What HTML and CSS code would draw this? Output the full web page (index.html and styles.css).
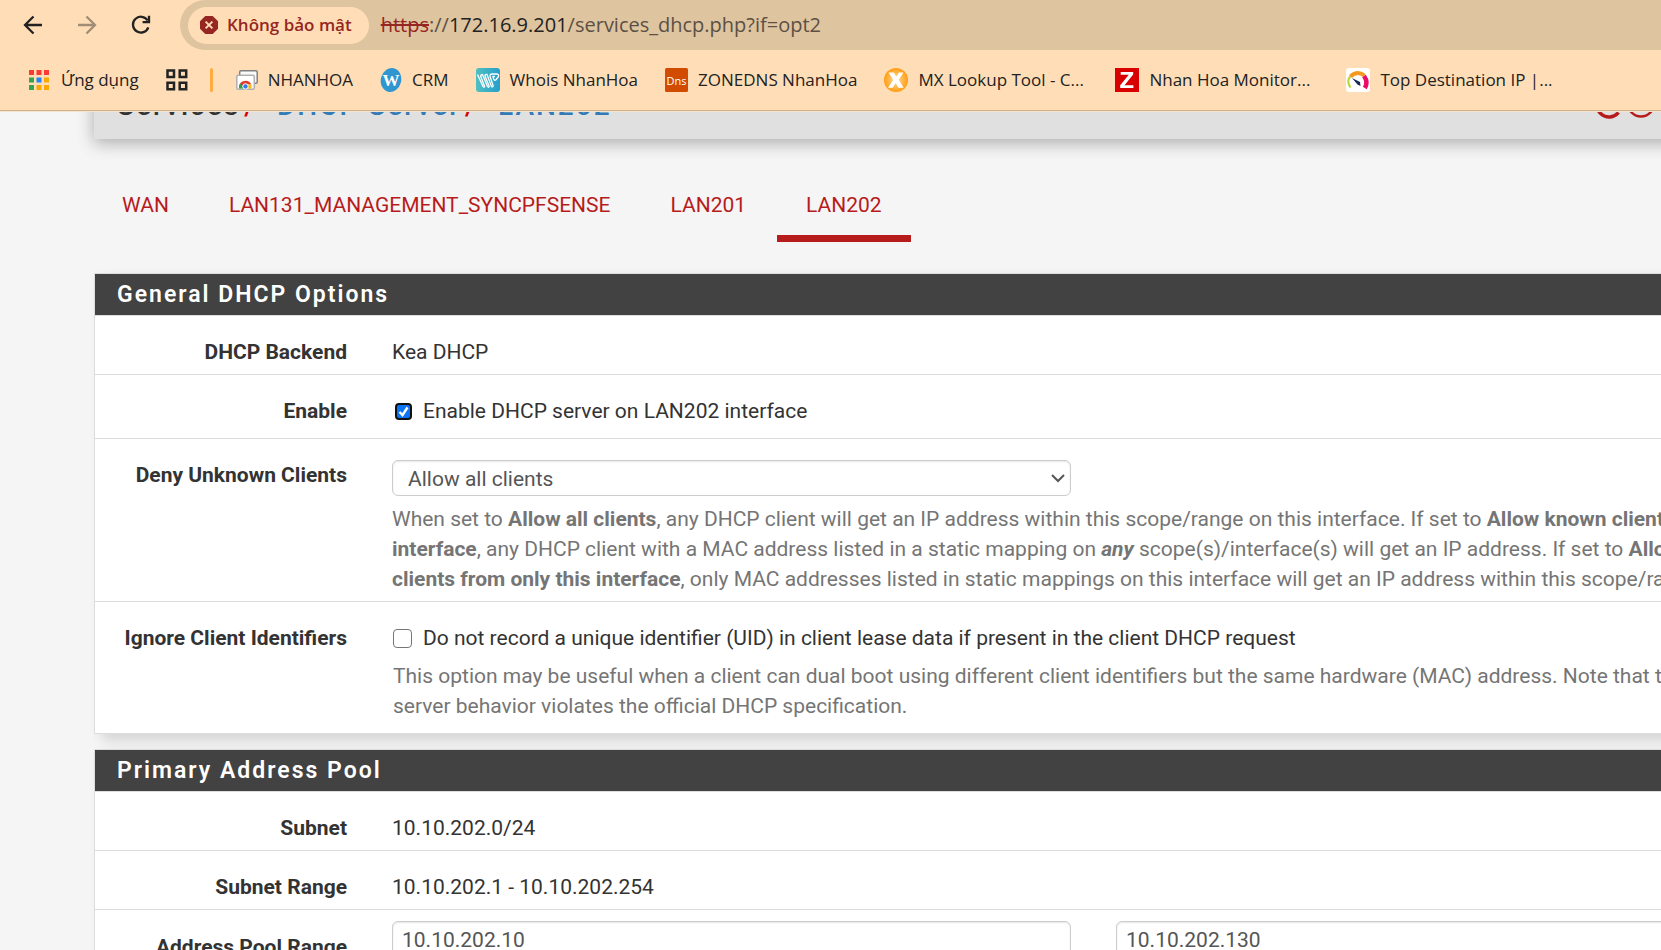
FILE: index.html
```html
<!DOCTYPE html>
<html lang="vi">
<head>
<meta charset="utf-8">
<title>Services: DHCP Server: LAN202</title>
<link rel="stylesheet" href="styles.css">
</head>
<body>
<div class="browser">
  <div class="toolbar">
    <button class="nav-btn" aria-label="Back"><svg width="20" height="20" viewBox="0 0 20 20" fill="none" stroke="#222" stroke-width="2.3"><path d="M19 10H2.500M10.500 1.500L2 10l8.500 8.500"/></svg></button>
    <button class="nav-btn nav-btn-off" aria-label="Forward"><svg width="20" height="20" viewBox="0 0 20 20" fill="none" stroke="#a08d76" stroke-width="2.300"><path d="M1 10h16.500M9.500 1.500L18 10l-8.500 8.500"/></svg></button>
    <button class="nav-btn" aria-label="Reload"><svg width="20" height="20" viewBox="0 0 20 20" fill="none" stroke="#222" stroke-width="2.300"><path d="M17.300 12.300A7.900 7.900 0 1 1 16.600 5.500"/><path d="M18 .8v6.400h-6.400"/></svg></button>
    <div class="omnibox">
      <button class="security"><svg width="18" height="18" viewBox="0 0 18 18"><path fill="#952622" d="M5.300 0h7.400L18 5.300v7.400L12.700 18H5.300L0 12.700V5.300z"/><path stroke="#ffdeb7" stroke-width="1.900" d="M5.600 5.600l6.800 6.800M12.400 5.600l-6.800 6.800"/></svg><span>Không bảo mật</span></button>
      <div class="url"><s>https</s>://<b>172.16.9.201</b>/services_dhcp.php?if=opt2</div>
    </div>
  </div>
  <nav class="bookmarks">
    <a class="bookmark apps" href="#"><svg width="20" height="20" viewBox="0 0 20 20"><path fill="#fb3a31" d="M0 0h5v5H0zM7.500 0h5v5h-5zM15 0h5v5h-5z"/><path fill="#34a352" d="M0 7.500h5v5H0zM0 15h5v5H0z"/><path fill="#1f85f7" d="M7.500 7.500h5v5h-5z"/><path fill="#f8a905" d="M15 7.500h5v5h-5zM7.500 15h5v5h-5zM15 15h5v5h-5z"/></svg><span>Ứng dụng</span></a>
    <button class="tab-groups" aria-label="Tab groups"><svg width="22" height="22" viewBox="0 0 22 22" fill="none" stroke="#222" stroke-width="2.500"><path d="M1.500 1.500h6.500v6.500H1.500zM13.700 1.500h6.500v6.500h-6.500zM1.500 13.700h6.500v6.500H1.500zM13.700 13.700h6.500v6.500h-6.500z"/></svg></button>
    <span class="divider"></span>
    <a class="bookmark" href="#"><svg width="22" height="20" viewBox="0 0 22 20"><rect x="3.700" y=".8" width="17.500" height="12.500" rx="1.200" fill="#fafafa" stroke="#808080" stroke-width="1.500"/><rect x=".8" y="5.200" width="17.500" height="14" rx="1.200" fill="#fff" stroke="#b0b0b0" stroke-width="1.500"/><path fill="#e33b2e" d="M3 17.500a6.500 6.500 0 0 1 12.300-3H9.500z"/><path fill="#2f9e4f" d="M3 17.500a6.500 6.500 0 0 1 1.300-4l4 5H3z"/><path fill="#fbbd08" d="M15.300 14.500a6.500 6.500 0 0 1 .2 4h-5l1-4z"/><circle cx="9.500" cy="16.400" r="2.700" fill="#3b78e7" stroke="#fff"/></svg><span>NHANHOA</span></a>
    <a class="bookmark" href="#"><svg width="22" height="24" viewBox="0 0 22 24"><ellipse cx="11" cy="12" rx="10.200" ry="12" fill="#2f96cf" transform="rotate(14 11 12)"/><text class="mark mark-w" x="11" y="18" text-anchor="middle">W</text></svg><span>CRM</span></a>
    <a class="bookmark" href="#"><svg width="24" height="24" viewBox="0 0 24 24"><defs><linearGradient id="whois"><stop stop-color="#4fc0c0"/><stop offset="1" stop-color="#259fcd"/></linearGradient></defs><rect width="24" height="24" rx="3" fill="url(#whois)"/><path fill="none" stroke="#fff" stroke-width="1.300" stroke-linejoin="round" d="M1.500 6.500l5.500 12q1 1.500 1.700 0l-4-10q0-2 1.800-2l5 12q1 1.500 1.800 0L9 8q0-2 2-1.500l4.500 12q1 1 1.700-.5l-3-9q-1-3 2-3h4.500q3 .5 1.500 3l-2.500 3q-1.500 1-2-1l-.8-2.500h2"/></svg><span>Whois NhanHoa</span></a>
    <a class="bookmark" href="#"><svg width="23" height="24" viewBox="0 0 23 24"><rect width="23" height="24" rx="1.500" fill="#d14b02"/><text class="mark mark-dns" x="11.500" y="17" text-anchor="middle">Dns</text></svg><span>ZONEDNS NhanHoa</span></a>
    <a class="bookmark bookmark-wide" href="#"><svg width="24" height="24" viewBox="0 0 24 24"><defs><radialGradient id="mx"><stop stop-color="#ffdda0"/><stop offset="1" stop-color="#ff9d12"/></radialGradient></defs><circle cx="12" cy="12" r="12" fill="url(#mx)"/><path fill="#fff" d="M4.500 4.500h5.300l2.500 4 2.700-4h4.500l-4.800 7.200 5 8h-5.300l-2.700-4.600-3 4.600H4l5.200-7.700z"/></svg><span>MX Lookup Tool - C...</span></a>
    <a class="bookmark bookmark-wide" href="#"><svg width="24" height="24" viewBox="0 0 24 24"><path fill="#d80000" d="M0 0h24v24H0z"/><path fill="#fff" d="M5.700 4h12.500v2.600L9.500 17.200h8.900V20H5.200v-2.700L13.800 6.800H5.700z"/></svg><span>Nhan Hoa Monitor...</span></a>
    <a class="bookmark bookmark-wide" href="#"><svg width="24" height="24" viewBox="0 0 24 24" fill="none"><rect width="24" height="24" rx="3" fill="#fff"/><path stroke="#b7d334" stroke-width="2" d="M4.500 19.500Q0 13 4.500 8"/><path stroke="#f6981d" stroke-width="4" d="M4.500 8.500Q11 2 18.500 7.500"/><path stroke="#ec0c66" stroke-width="4.500" d="M18 8q4.500 6 .8 12"/><path fill="#152a52" d="M6 10l8 4 .5 4-3-1.500z"/></svg><span>Top Destination IP |...</span></a>
  </nav>
</div>
<main class="page">
  <header class="page-header">
    <h1 class="crumbs"><span>Services</span><i>/</i><a href="#">DHCP Server</a><i>/</i><a href="#">LAN202</a></h1>
    <div class="tools">
      <a href="#" aria-label="Restart service"><svg width="24" height="24" viewBox="0 0 24 24" fill="none" stroke="#b71c1c" stroke-width="3.500"><path d="M21.500 18.500A12 12 0 1 1 21 3"/><path d="M22 1v7h-7"/></svg></a>
      <a href="#" aria-label="Stop service"><svg width="24" height="24" viewBox="0 0 24 24" fill="none" stroke="#b71c1c" stroke-width="2.500"><circle cx="12" cy="9.500" r="13"/><path d="M8 5h8v8H8z"/></svg></a>
    </div>
  </header>
  <nav class="tabs">
    <a class="tab" href="#">WAN</a>
    <a class="tab" href="#">LAN131_MANAGEMENT_SYNCPFSENSE</a>
    <a class="tab" href="#">LAN201</a>
    <a class="tab active" href="#">LAN202</a>
  </nav>
  <form>
  <section class="panel">
    <h2>General DHCP Options</h2>
    <div class="row">
      <div class="name">DHCP Backend</div>
      <div class="field">Kea DHCP</div>
    </div>
    <div class="row roomy">
      <div class="name">Enable</div>
      <div class="field"><label class="check"><input class="focused" type="checkbox" checked>Enable DHCP server on LAN202 interface</label></div>
    </div>
    <div class="row">
      <label class="name" for="deny">Deny Unknown Clients</label>
      <div class="select-wrap">
        <select id="deny"><option>Allow all clients</option></select>
        <svg class="chevron" width="14" height="9" viewBox="0 0 14 9" fill="none" stroke="#555" stroke-width="2"><path d="M1 1l6 6 6-6"/></svg>
      </div>
      <p class="help">When set to <b>Allow all clients</b>, any DHCP client will get an IP address within this scope/range on this interface. If set to <b>Allow known clients from any interface</b>, any DHCP client with a MAC address listed in a static mapping on <b><em>any</em></b> scope(s)/interface(s) will get an IP address. If set to <b>Allow known clients from only this interface</b>, only MAC addresses listed in static mappings on this interface will get an IP address within this scope/range.</p>
    </div>
    <div class="row roomy">
      <div class="name">Ignore Client Identifiers</div>
      <div class="field"><label class="check"><input type="checkbox">Do not record a unique identifier (UID) in client lease data if present in the client DHCP request</label></div>
      <p class="help check-help">This option may be useful when a client can dual boot using different client identifiers but the same hardware (MAC) address. Note that the resulting server behavior violates the official DHCP specification.</p>
    </div>
  </section>
  <section class="panel">
    <h2>Primary Address Pool</h2>
    <div class="row">
      <div class="name">Subnet</div>
      <div class="field">10.10.202.0/24</div>
    </div>
    <div class="row">
      <div class="name">Subnet Range</div>
      <div class="field">10.10.202.1 - 10.10.202.254</div>
    </div>
    <div class="row inputs">
      <label class="name" for="from">Address Pool Range</label>
      <input class="text" id="from" type="text" value="10.10.202.10">
      <input class="text" type="text" value="10.10.202.130" aria-label="Address pool range end">
    </div>
  </section>
  </form>
</main>
</body>
</html>
```
FILE: styles.css
```css
* { box-sizing: border-box; }
body {
  margin: 0;
  height: 100vh;
  overflow: hidden;
  display: flex;
  flex-direction: column;
  background: #f5f5f5;
  color: #333;
  font: 21px/30px Roboto, sans-serif;
}
a { color: inherit; text-decoration: none; }
button { border: 0; padding: 0; background: none; font: inherit; color: inherit; }
svg { display: block; flex: none; }

.browser {
  position: relative;
  z-index: 1;
  flex: none;
  background: #ffdeb7;
  border-bottom: 1px solid #f5e3cd;
  box-shadow: inset 0 -1px #d0b189;
  color: #222;
  font-family: "Open Sans", sans-serif;
}
.toolbar { display: flex; align-items: center; height: 50px; padding-left: 23px; }
.nav-btn { margin-right: 34px; }
.omnibox {
  flex: 1;
  display: flex;
  align-items: center;
  gap: 12px;
  height: 50px;
  margin-left: -5px;
  padding-left: 8px;
  background: #dfc4a0;
  border-radius: 25px 0 0 25px;
}
.security {
  display: flex;
  align-items: center;
  gap: 9px;
  height: 37px;
  padding: 0 17px 0 12px;
  border-radius: 19px;
  background: #ffdeb7;
  color: #952622;
  font-size: 17px;
  font-weight: 600;
}
.url { font-size: 20px; color: #5b5044; white-space: nowrap; }
.url s { color: #952622; }
.url b { font-weight: 400; color: #222; }

.bookmarks { display: flex; align-items: center; height: 61px; padding: 0 0 1px 29px; font-size: 17px; }
.bookmark { display: flex; align-items: center; gap: 10px; margin-right: 27px; white-space: nowrap; }
.bookmark-wide { width: 231px; margin: 0; }
.bookmark.apps { gap: 12px; }
.divider { width: 3px; height: 24px; margin: 0 23px 0 22px; background: #ffab40; border-radius: 2px; }
.mark { fill: #fff; font-weight: 700; }
.mark-w { font-family: "Liberation Serif", serif; font-size: 17px; }
.mark-dns { font-family: "Open Sans", sans-serif; font-size: 11px; font-weight: 400; }

.page { flex: 1; min-width: 1818px; min-height: 0; padding-left: 94px; overflow: clip; }
.page-header {
  display: flex;
  align-items: center;
  justify-content: space-between;
  height: 62px;
  margin-top: -35px;
  padding: 0 165px 4px 23px;
  background: #e0e0e0;
  box-shadow: 0 4px 16px rgba(0, 0, 0, .3);
}
.crumbs { display: flex; margin: 0; font-size: 28px; font-weight: 500; letter-spacing: 2px; }
.crumbs i { margin: 0 20px 0 4px; font-style: normal; color: #d50000; }
.crumbs a { color: #337ab7; }
.tools { display: flex; gap: 8px; }
.tools svg { overflow: visible; }

.tabs { display: flex; padding-top: 36px; margin: 0 0 31px -1px; }
.tab { padding: 15px 29px; margin-right: 2px; border-bottom: 7px solid transparent; color: #b71c1c; }
.tab.active { border-color: #b71c1c; }

.panel {
  margin-bottom: 15px;
  background: #fff;
  border: 1px solid #ddd;
  box-shadow: 8px 6px 12px rgba(0, 0, 0, .14);
}
.panel h2 {
  margin: 0;
  padding: 6px 22px 5px;
  background: #424242;
  color: #fff;
  font-size: 23px;
  font-weight: 600;
  line-height: 30px;
  letter-spacing: 2px;
}
.row {
  display: grid;
  grid-template-columns: 252px 1fr 1fr;
  column-gap: 45px;
  padding: 21px 22px 7px 0;
  border-top: 1px solid #ddd;
}
.roomy { padding-bottom: 12px; }
.name { text-align: right; font-weight: 700; }
.field, .help { grid-column: 2 / 4; }
.help { margin: 8px 0 0; color: #757575; }
.check-help { margin-left: 1px; }
.check { display: flex; align-items: center; gap: 11px; }
.check input {
  appearance: none;
  width: 19px;
  height: 19px;
  margin: 0 0 0 1px;
  border: 1px solid #767676;
  border-radius: 4px;
  background: #fff;
}
.check .focused {
  width: 17px;
  height: 17px;
  margin: 0 0 0 3px;
  border: 2px solid #101010;
  border-radius: 4px;
  background: #0a75f5 url("data:image/svg+xml,%3Csvg xmlns='http://www.w3.org/2000/svg' viewBox='0 0 13 13'%3E%3Cpath d='M2.500 7l3 3 5-7.500' fill='none' stroke='white' stroke-width='2.400'/%3E%3C/svg%3E");
}
.select-wrap { position: relative; }
.select-wrap select, .text {
  display: block;
  width: 100%;
  height: 36px;
  padding: 0 15px;
  border: 1px solid #ccc;
  border-radius: 6px;
  background: #fff;
  box-shadow: inset 0 1px 2px rgba(0, 0, 0, .1);
  color: #555;
  font: inherit;
  appearance: none;
}
.select-wrap select { padding-top: 1px; }
.chevron { position: absolute; right: 6px; top: 14px; }
.inputs { padding-top: 11px; }
.inputs .name { padding-top: 11px; }
.text { padding: 1px 9px 0; }
```
